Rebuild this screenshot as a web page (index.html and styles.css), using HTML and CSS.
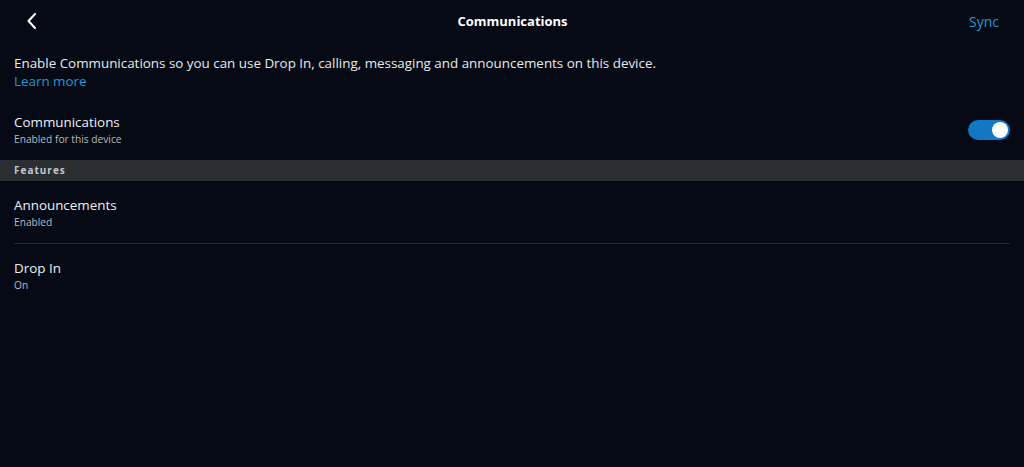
FILE: index.html
```html
<!DOCTYPE html>
<html>
<head>
<meta charset="utf-8">
<link rel="stylesheet" href="styles.css">
</head>
<body>
<div class="page">
  <header class="topbar">
    <div class="back">
      <svg width="12" height="18" viewBox="0 0 12 18"><path d="M9 2 L2.5 9 L9 16" fill="none" stroke="#ffffff" stroke-width="2" stroke-linecap="round" stroke-linejoin="round"/></svg>
    </div>
    <div class="title">Communications</div>
    <div class="sync">Sync</div>
  </header>
  <section class="intro">
    <p class="desc">Enable Communications so you can use Drop In, calling, messaging and announcements on this device.</p>
    <a class="link">Learn more</a>
  </section>
  <div class="row row-main">
    <div class="texts">
      <div class="label">Communications</div>
      <div class="sub">Enabled for this device</div>
    </div>
    <div class="toggle"><span class="knob"></span></div>
  </div>
  <div class="section-head">Features</div>
  <div class="list">
    <div class="row item">
      <div class="texts">
        <div class="label">Announcements</div>
        <div class="sub">Enabled</div>
      </div>
    </div>
    <div class="row item">
      <div class="texts">
        <div class="label">Drop In</div>
        <div class="sub">On</div>
      </div>
    </div>
  </div>
</div>
</body>
</html>
```
FILE: styles.css
```css
html, body {
  margin: 0;
  padding: 0;
  background: #050a14;
  height: 100%;
}
body {
  font-family: "Open Sans", "Noto Sans", sans-serif;
  color: #e8eaec;
}
.page {
  display: flex;
  flex-direction: column;
}
.topbar {
  height: 42px;
  display: grid;
  grid-template-columns: 1fr auto 1fr;
  align-items: center;
  padding: 0 25px 0 26px;
}
.back {
  display: flex;
  align-items: center;
}
.title {
  font-weight: 700;
  font-size: 13px;
  color: #ffffff;
}
.sync {
  justify-self: end;
  font-size: 14px;
  color: #1e9ad6;
}
.intro {
  padding: 12px 14px 0 14px;
}
.desc {
  margin: 0;
  font-size: 13.4px;
  line-height: 18px;
}
.link {
  display: block;
  font-size: 13.4px;
  line-height: 18px;
  color: #1e9ad6;
}
.row {
  display: flex;
  align-items: center;
  justify-content: space-between;
}
.row-main {
  padding: 23px 14px 13px 14px;
}
.texts {
  display: flex;
  flex-direction: column;
}
.label {
  font-size: 13.4px;
  line-height: 18px;
  color: #eef0f2;
}
.sub {
  font-size: 10.2px;
  line-height: 16px;
  color: #b8bcc2;
}
.toggle {
  width: 42px;
  height: 20px;
  border-radius: 10px;
  background: #1477c4;
  position: relative;
}
.knob {
  position: absolute;
  right: 2px;
  top: 2px;
  width: 16px;
  height: 16px;
  border-radius: 50%;
  background: #ffffff;
}
.section-head {
  height: 21px;
  line-height: 21px;
  background: #2a2d32;
  padding: 0 14px;
  font-size: 10px;
  font-weight: 700;
  letter-spacing: 1px;
  color: #c4c7cb;
}
.list {
  padding: 0 14px;
}
.item {
  padding: 15px 0 13px 0;
}
.item + .item {
  border-top: 1px solid #23272d;
}
```
